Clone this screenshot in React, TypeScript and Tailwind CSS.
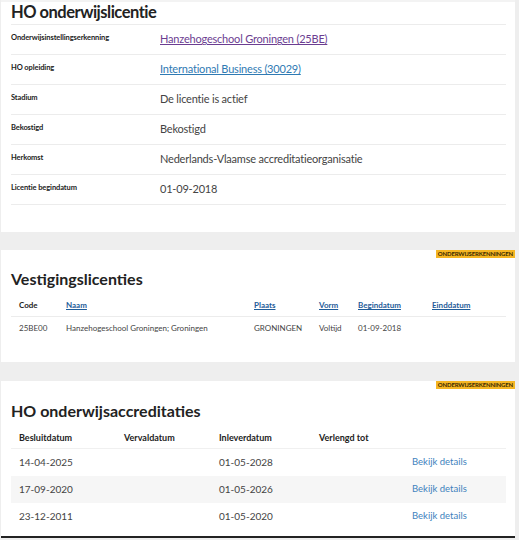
const licenseRows = [
  { label: 'Onderwijsinstellingserkenning', value: 'Hanzehogeschool Groningen (25BE)', link: 'visited' },
  { label: 'HO opleiding', value: 'International Business (30029)', link: 'link' },
  { label: 'Stadium', value: 'De licentie is actief' },
  { label: 'Bekostigd', value: 'Bekostigd' },
  { label: 'Herkomst', value: 'Nederlands-Vlaamse accreditatieorganisatie' },
  { label: 'Licentie begindatum', value: '01-09-2018' },
]

const accreditaties = [
  { besluit: '14-04-2025', inlever: '01-05-2028' },
  { besluit: '17-09-2020', inlever: '01-05-2026' },
  { besluit: '23-12-2011', inlever: '01-05-2020' },
]

const Badge = () => (
  <div className="-mr-[9px] flex justify-end">
    <span className="bg-[#f5b623] px-[2px] text-[6px] font-bold leading-[8px] tracking-tight text-[#3a2a00]">
      ONDERWIJSERKENNINGEN
    </span>
  </div>
)

export default function App() {
  return (
    <div className="h-[540px] w-[519px] overflow-hidden bg-[#eeeeee] font-['Lato',sans-serif] text-[#333]">
      <section className="ml-[1px] mr-[4px] h-[232px] border-t-2 border-[#f3f3f3] bg-white px-[10px] pr-[9px]">
        <h1 className="text-[16.5px] font-bold leading-[21px] tracking-[-0.5px] text-[#222]">HO onderwijslicentie</h1>
        <div className="mt-[1px] border-t border-[#ececec]">
          {licenseRows.map((row) => (
            <div key={row.label} className="flex h-[30px] items-center border-b border-[#ececec]">
              <div className="w-[149px] -translate-y-[2px] text-[7.5px] font-bold tracking-[-0.1px] text-[#222]">
                {row.label}
              </div>
              <div
                className={
                  row.link === 'visited'
                    ? 'text-[11px] tracking-[-0.2px] text-[#6b3d91] underline'
                    : row.link === 'link'
                    ? 'text-[11px] tracking-[-0.2px] text-[#2f7ab3] underline'
                    : 'text-[11px] tracking-[-0.2px] text-[#444]'
                }
              >
                {row.value}
              </div>
            </div>
          ))}
        </div>
      </section>

      <section className="ml-[1px] mr-[4px] mt-[18px] h-[112px] bg-white pl-[10px] pr-[9px]">
        <Badge />
        <h2 className="mt-[10px] text-[16px] font-bold leading-[22px] text-[#222]">Vestigingslicenties</h2>
        <div className="mt-[9px] flex h-[18px] items-start border-b border-[#ececec] pl-[8px] text-[8px] font-bold">
          <span className="w-[47px] text-[#222]">Code</span>
          <span className="w-[188px] text-[#1f5c99] underline">Naam</span>
          <span className="w-[65px] text-[#1f5c99] underline">Plaats</span>
          <span className="w-[39px] text-[#1f5c99] underline">Vorm</span>
          <span className="w-[74px] text-[#1f5c99] underline">Begindatum</span>
          <span className="text-[#1f5c99] underline">Einddatum</span>
        </div>
        <div className="flex h-[22px] items-center pl-[8px] text-[8px] text-[#444]">
          <span className="w-[47px]">25BE00</span>
          <span className="w-[188px]">Hanzehogeschool Groningen; Groningen</span>
          <span className="w-[65px]">GRONINGEN</span>
          <span className="w-[39px]">Voltijd</span>
          <span>01-09-2018</span>
        </div>
      </section>

      <section className="ml-[1px] mr-[4px] mt-[19px] h-[157px] border-b-2 border-[#222] bg-white pl-[10px] pr-[9px]">
        <Badge />
        <h2 className="mt-[11px] text-[16px] font-bold leading-[22px] text-[#222]">HO onderwijsaccreditaties</h2>
        <div className="mt-[9px] flex h-[18px] items-start border-b border-[#f0f0f0] pl-[8px] text-[9px] font-bold text-[#222]">
          <span className="w-[105px]">Besluitdatum</span>
          <span className="w-[95px]">Vervaldatum</span>
          <span className="w-[100px]">Inleverdatum</span>
          <span>Verlengd tot</span>
        </div>
        {accreditaties.map((row, i) => (
          <div
            key={row.besluit}
            className={`flex h-[27px] items-center pl-[8px] text-[10px] text-[#444] ${i === 1 ? 'bg-[#f6f6f6]' : ''}`}
          >
            <span className="w-[200px]">{row.besluit}</span>
            <span className="w-[193px]">{row.inlever}</span>
            <span className="text-[9.5px] text-[#3d82bd]">Bekijk details</span>
          </div>
        ))}
      </section>
    </div>
  )
}
